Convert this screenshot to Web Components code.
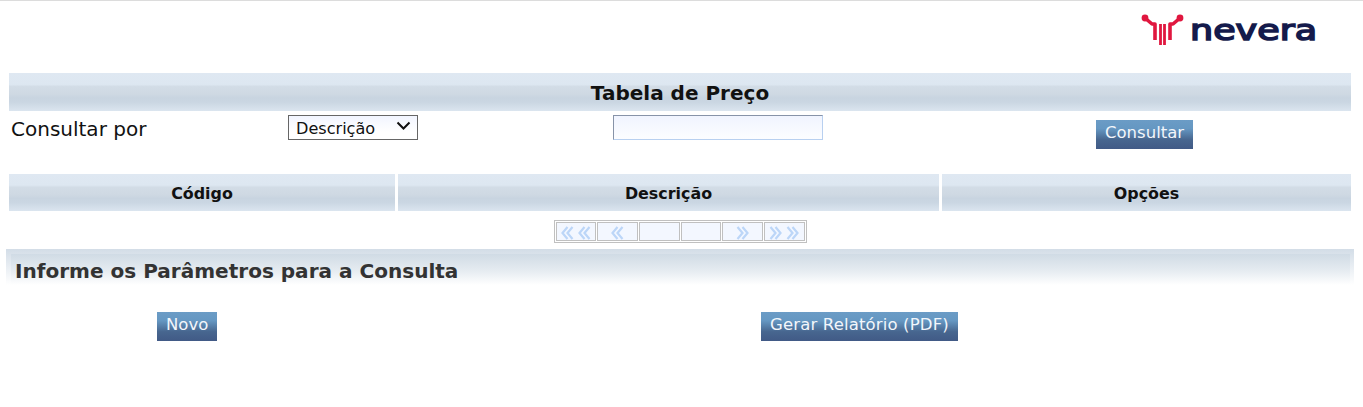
<!DOCTYPE html>
<html lang="pt-BR"><head><meta charset="utf-8"><title>Tabela de Preço</title>
<style>
html,body{margin:0;padding:0;background:#fff;font-family:"DejaVu Sans",Verdana,sans-serif;color:#000}
body{height:407px;overflow:hidden}
</style></head><body>
<nv-app></nv-app>
<script>
const BAR='linear-gradient(180deg,#dfe8f2 0,#dde7f1 30%,#d2dce6 36%,#cfd9e3 55%,#c8d4e0 66%,#cbd7e3 78%,#dbe5ef 100%)';
function def(name,html,init){
  customElements.define(name,class extends HTMLElement{
    constructor(){super();this.attachShadow({mode:'open'}).innerHTML=html;}
    connectedCallback(){if(init)init(this);}
  });
}
def('nv-logo',`<style>:host{display:block;width:180px;height:60px}svg{display:block}
text{font:400 27.5px "DejaVu Sans",sans-serif;fill:#141a4b;stroke:#141a4b;stroke-width:1.5}</style>
<svg width="180" height="60" viewBox="0 -10 180 60" role="img" aria-label="nevera">
<g fill="none" stroke="#e0173f" stroke-width="3.6" stroke-linejoin="round">
<path d="M4 3 L11 9 H14 V25"/><path d="M39 3 L32 9 H29 V25"/>
<path d="M19.5 9 V30" stroke-width="2.8"/><path d="M23.5 9 V30" stroke-width="2.8"/></g>
<circle cx="4" cy="3" r="3.4" fill="#e0173f"/><circle cx="39" cy="3" r="3.4" fill="#e0173f"/>
<text x="49" y="24.5" textLength="127" lengthAdjust="spacingAndGlyphs">nevera</text></svg>`);
def('nv-title',`<style>:host{display:flex;align-items:center;justify-content:center;box-sizing:border-box;padding-top:2px;height:38px;background:${BAR};font:700 20px "DejaVu Sans",sans-serif;color:#111}</style><slot></slot>`);
def('nv-button',`<style>:host{display:inline-flex;align-items:center;justify-content:center;height:29px;padding:0 9px 4px;box-sizing:border-box;
background:linear-gradient(180deg,#6b9cc6 0,#6597c2 30%,#47668f 68%,#415a86 100%);color:#f2f6fb;font:16.5px "DejaVu Sans",sans-serif;white-space:nowrap}</style><slot></slot>`);
def('nv-select',`<style>:host{display:flex;align-items:center;justify-content:space-between;box-sizing:border-box;width:130px;height:25px;border:1px solid #666;padding:2px 6px 0 7px;
background:linear-gradient(180deg,#f2f5ff,#fff 70%);font:16.1px "DejaVu Sans",sans-serif;color:#111}
svg{display:block;margin-top:-6px}</style><span><slot></slot></span>
<svg width="15" height="9" viewBox="0 0 15 9"><path d="M1.5 1.5 L7.5 7.5 L13.5 1.5" fill="none" stroke="#111" stroke-width="2"/></svg>`);
def('nv-input',`<style>:host{display:block;box-sizing:border-box;width:210px;height:25px;border:1px solid;border-color:#8793a8 #b8d0f0 #b8d0f0 #8793a8;background:linear-gradient(180deg,#f0f4ff,#fcfdff)}</style>`);
def('nv-form-row',`<style>:host{display:grid;grid-template-columns:279px 325px 483px 1fr;height:63px;margin-top:0;font:20px "DejaVu Sans",sans-serif;color:#111}
.l{padding:6px 0 0 2px;line-height:24px}.s,.i{padding-top:4px}.b{padding-top:9px;display:flex;align-items:flex-start}</style>
<div class="l"><slot name="label"></slot></div><div class="s"><slot name="select"></slot></div><div class="i"><slot name="input"></slot></div><div class="b"><slot name="button"></slot></div>`);
def('nv-grid-head',`<style>:host{display:grid;grid-template-columns:386px 1fr 409px;column-gap:3px;height:37px}</style><slot></slot>`);
def('nv-th',`<style>:host{display:flex;align-items:center;justify-content:center;box-sizing:border-box;padding-top:2px;background:${BAR};font:700 15.9px "DejaVu Sans",sans-serif;color:#111}</style><slot></slot>`);
const ch=(dir,n)=>{const p=dir<0?'M7 2 L2 8 L7 14 M12 2 L7 8 L12 14':'M2 2 L7 8 L2 14 M7 2 L12 8 L7 14';
  let s='';for(let i=0;i<n;i++)s+=`<svg width="15" height="16" viewBox="0 0 14 16"><path d="${p}" fill="none" stroke="#bcd6f8" stroke-width="2.2"/></svg>`;return s;};
def('nv-pager',`<style>:host{display:flex;box-sizing:border-box;width:253px;height:23px;border:1px solid #c0c0c0;padding:1px;gap:1px;background:#fff;outline:0}
.c{flex:1;box-sizing:border-box;border:1px solid #c0c0c0;background:#f3f7ff;display:flex;align-items:flex-end;justify-content:center;gap:2px;overflow:hidden;height:19px}
svg{display:block;margin-bottom:-1px}</style>
<div class="c">${ch(-1,2)}</div><div class="c">${ch(-1,1)}</div><div class="c"></div><div class="c"></div><div class="c">${ch(1,1)}</div><div class="c">${ch(1,2)}</div>`);
def('nv-section',`<style>:host{display:block;margin:0 9px 0 6px;padding:5px 4px 0 5px;height:36px;box-sizing:border-box;position:relative}
.o{position:absolute;inset:0;background:linear-gradient(180deg,#d3dde7 0,#fff 100%);pointer-events:none}
.i{position:relative;height:31px;background:linear-gradient(180deg,#d0dbe5 0,#e6ecf1 55%,#fff 100%);padding-left:4px;font:700 20.05px/34px "DejaVu Sans",sans-serif;color:#333;white-space:nowrap}</style>
<div class="o"></div><div class="i"><slot></slot></div>`);
def('nv-app',`<style>:host{display:block;width:1363px;border-top:1px solid #dcdcdc}
.logo{display:flex;justify-content:flex-end;height:72px;box-sizing:border-box;padding:4px 42px 0 0}
.main{padding:0 12px 0 9px}
.pager{display:flex;justify-content:center;padding:9px 0 6px 0;margin-left:-3px}
.act{display:grid;grid-template-columns:604px auto;padding:27px 0 0 157px}
.act>div:last-child{justify-self:start}
.wide{letter-spacing:.15px}</style>
<div class="logo"><nv-logo></nv-logo></div>
<div class="main"><nv-title>Tabela de Preço</nv-title>
<nv-form-row><span slot="label">Consultar por</span><nv-select slot="select">Descrição</nv-select><nv-input slot="input"></nv-input><nv-button slot="button">Consultar</nv-button></nv-form-row>
<nv-grid-head><nv-th>Código</nv-th><nv-th>Descrição</nv-th><nv-th>Opções</nv-th></nv-grid-head></div>
<div class="pager"><nv-pager></nv-pager></div>
<nv-section>Informe os Parâmetros para a Consulta</nv-section>
<div class="act"><div><nv-button>Novo</nv-button></div><div><nv-button class="wide">Gerar Relatório (PDF)</nv-button></div></div>`);
</script></body></html>
